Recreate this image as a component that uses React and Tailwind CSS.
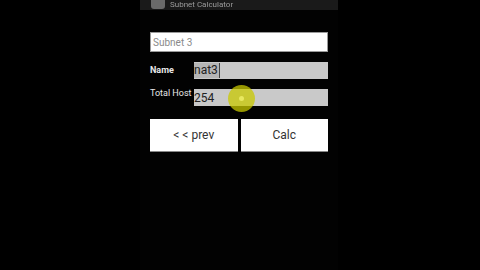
import React from 'react';

const App = () => {
    return (
        <div className="w-[480px] h-[270px] bg-black flex justify-center overflow-hidden" style={{ fontFamily: 'Roboto, "Liberation Sans", sans-serif' }}>
            <div className="w-[198px] h-full bg-[#020202] flex flex-col ml-[-2px]">
                {/* title bar, cut off at top */}
                <div className="h-[10px] bg-[#1a1a1a] flex items-end overflow-hidden px-[11px] gap-[5px]">
                    <div className="w-[14px] h-[14px] mb-[1px] rounded-[3px] bg-[#6a6a6a] shrink-0"></div>
                    <span className="text-[8px] leading-[9px] text-[#9a9a9a] blur-[0.6px] whitespace-nowrap mb-[1px]">Subnet Calculator</span>
                </div>

                <div className="flex flex-col px-[10px] pt-[22px]">
                    <div className="h-[20px] bg-white border border-[#9a9a9a] flex items-center px-[2px]">
                        <span className="text-[10px] text-[#8a8a8a]">Subnet 3</span>
                    </div>

                    <div className="flex items-start mt-[10px]">
                        <span className="w-[44px] text-[9px] font-bold text-[#e8e8e8] pt-[2px]">Name</span>
                        <div className="flex-1 h-[17px] bg-[#c9c9c9] flex items-center">
                            <span className="text-[12px] text-[#222] bg-[#b5b5b5] pr-[1px] border-r border-[#444] leading-[15px]">nat3</span>
                        </div>
                    </div>

                    <div className="flex items-start mt-[10px]">
                        <span className="w-[44px] text-[9px] text-[#e8e8e8] mt-[-2px] whitespace-nowrap">Total Host</span>
                        <div className="flex-1 h-[17px] bg-[#c9c9c9] flex items-center relative">
                            <span className="text-[12px] text-[#222] leading-[15px] mt-[2px]">254</span>
                            <div className="absolute left-[34px] top-[-4px] w-[27px] h-[27px] rounded-full bg-[#c8c800]/75 flex items-center justify-center">
                                <div className="w-[5px] h-[5px] rounded-full bg-[#e8e860]"></div>
                            </div>
                        </div>
                    </div>

                    <div className="flex gap-[3px] mt-[13px]">
                        <button className="flex-1 h-[33px] bg-white border-b border-[#888] text-[12px] text-[#333]">&lt; &lt; prev</button>
                        <button className="flex-1 h-[33px] bg-white border-b border-[#888] text-[12px] text-[#333]">Calc</button>
                    </div>
                </div>
            </div>
        </div>
    );
};

export default App;
